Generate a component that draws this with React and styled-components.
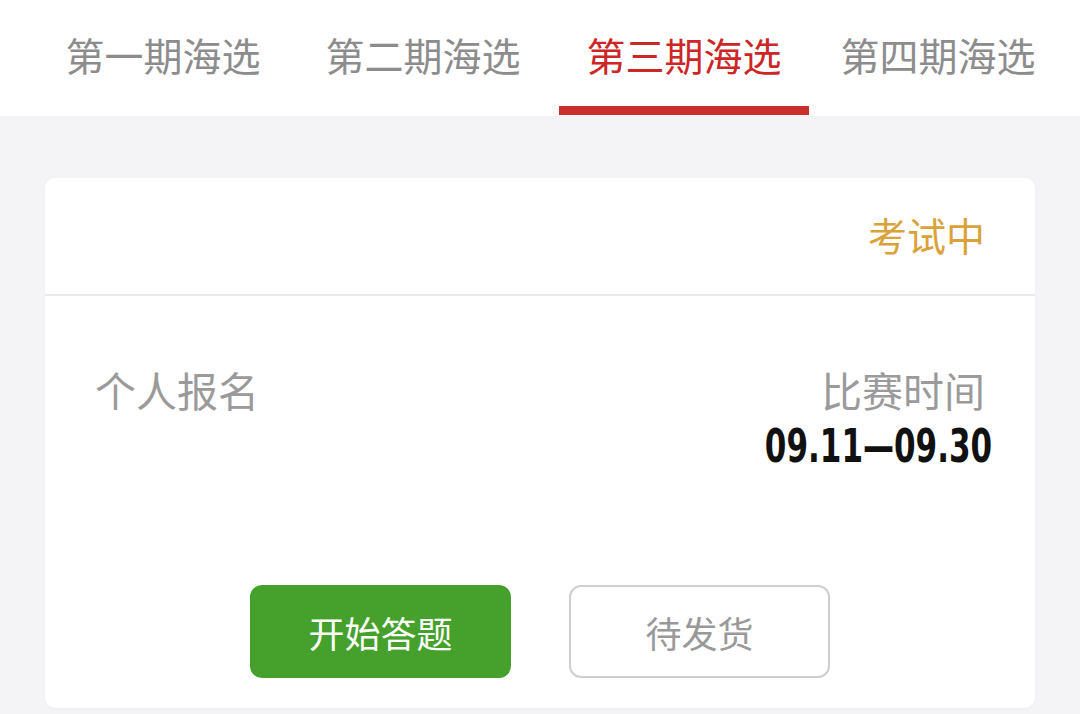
import React from 'react'
import styled, { createGlobalStyle } from 'styled-components'

const GlobalStyle = createGlobalStyle`
  html, body {
    margin: 0;
    padding: 0;
    background: #f4f4f6;
    font-family: "Noto Sans CJK SC", "Noto Sans", sans-serif;
  }
`

const tabs = ['第一期海选', '第二期海选', '第三期海选', '第四期海选']

const Page = styled.div`
  width: 1080px;
  height: 714px;
  background: #f4f4f6;
  overflow: hidden;
`

const TabBar = styled.nav`
  height: 116px;
  background: #fff;
  display: grid;
  grid-template-columns: 260px 260px 262px 246px;
  padding-left: 33px;
  box-sizing: border-box;
`

const Tab = styled.div`
  display: flex;
  flex-direction: column;
  align-items: center;
  justify-content: flex-end;
  position: relative;
`

const TabLabel = styled.span`
  font-size: 39px;
  line-height: 1;
  color: ${({ active }) => (active ? '#cc2627' : '#8c8c8c')};
  margin-bottom: 42px;
  white-space: nowrap;
`

const Underline = styled.div`
  width: 250px;
  height: 9px;
  background: #c9302b;
  position: absolute;
  bottom: 1px;
`

const Content = styled.main`
  padding: 62px 45px 0;
`

const Card = styled.section`
  background: #fff;
  border-radius: 10px;
  box-shadow: 0 1px 3px rgba(0, 0, 0, 0.04);
  height: 530px;
  display: flex;
  flex-direction: column;
`

const CardHeader = styled.header`
  height: 116px;
  display: flex;
  align-items: center;
  justify-content: flex-end;
  padding: 0 50px;
  border-bottom: 2px solid #ebebeb;
`

const Status = styled.span`
  font-size: 39px;
  color: #d9a23a;
  margin-top: -4px;
`

const CardBody = styled.div`
  flex: 1;
  padding: 68px 50px 0;
  display: flex;
  flex-direction: column;
`

const InfoRow = styled.div`
  display: flex;
  justify-content: space-between;
  align-items: flex-start;
`

const Label = styled.span`
  font-size: 41px;
  line-height: 50px;
  color: #9a9a9a;
`

const TimeBlock = styled.div`
  display: flex;
  flex-direction: column;
  align-items: flex-end;
`

const Dates = styled.span`
  font-family: "DejaVu Sans Condensed", "DejaVu Sans", sans-serif;
  font-weight: 700;
  font-size: 46px;
  line-height: 40px;
  color: #111;
  margin-right: -7px;
  margin-top: 12px;
  transform: scaleX(0.75);
  transform-origin: right center;
  white-space: nowrap;
`

const Actions = styled.div`
  margin-top: auto;
  margin-bottom: 30px;
  display: flex;
  justify-content: center;
  gap: 58px;
`

const Button = styled.button`
  width: 261px;
  height: 93px;
  border-radius: 12px;
  font-family: inherit;
  font-size: 36px;
  border: 2px solid ${({ primary }) => (primary ? '#45a12c' : '#cfcfcf')};
  background: ${({ primary }) => (primary ? '#45a12c' : '#fff')};
  color: ${({ primary }) => (primary ? '#fff' : '#999')};
  padding: 0;
`

export default function App() {
  const current = 2
  return (
    <Page>
      <GlobalStyle />
      <TabBar>
        {tabs.map((t, i) => (
          <Tab key={t}>
            <TabLabel active={i === current}>{t}</TabLabel>
            {i === current && <Underline />}
          </Tab>
        ))}
      </TabBar>
      <Content>
        <Card>
          <CardHeader>
            <Status>考试中</Status>
          </CardHeader>
          <CardBody>
            <InfoRow>
              <Label>个人报名</Label>
              <TimeBlock>
                <Label>比赛时间</Label>
                <Dates>09.11—09.30</Dates>
              </TimeBlock>
            </InfoRow>
            <Actions>
              <Button primary>开始答题</Button>
              <Button>待发货</Button>
            </Actions>
          </CardBody>
        </Card>
      </Content>
    </Page>
  )
}
